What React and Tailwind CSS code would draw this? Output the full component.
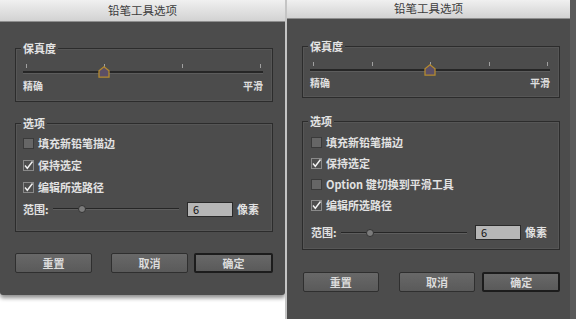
import React from 'react';

const FONT = { fontFamily: '"Noto Sans CJK SC", "Noto Sans", sans-serif' };

const CheckBox = ({ checked }) => (
  <svg width="11" height="11" viewBox="0 0 11 11" className="shrink-0">
    <rect x="0.5" y="0.5" width="10" height="10" fill={checked ? '#4e4e4e' : '#666666'} stroke={checked ? '#8a8a8a' : '#3a3a3a'} />
    {checked && <polyline points="2,5.5 4.3,8.3 9.5,1.5" fill="none" stroke="#f2f2f2" strokeWidth="1.4" />}
  </svg>
);

const Thumb = () => (
  <svg width="12" height="12" viewBox="0 0 12 12">
    <path d="M6 0.8 L11 4.8 L11 11.2 L1 11.2 L1 4.8 Z" fill="#5b4f66" stroke="#b48a2e" strokeWidth="1.3" />
  </svg>
);

const Group = ({ label, className, children }) => (
  <div className={`relative border border-[#2c2c2c] shadow-[inset_0_0_0_1px_#565656] ${className}`}>
    <span className="absolute left-[5px] -top-[8px] px-[2px] bg-[#4c4c4c] text-[11px] leading-[14px] font-bold text-[#e4e4e4]">
      {label}
    </span>
    {children}
  </div>
);

const Fidelity = ({ ticks, pos, labelGap, className }) => (
  <Group label="保真度" className={className}>
    <div className="pt-[15px] pl-[7px] pr-[9px]">
      <div className="relative h-[12px]">
        <div className="absolute left-[3px] right-[3px] top-0 h-[4px]">
          {ticks.map((t) => (
            <div key={t} className="absolute top-0 w-[1px] h-[4px] bg-[#a0a0a0]" style={{ left: `${t * 100}%` }} />
          ))}
        </div>
        <div className="absolute left-0 right-0 top-[7px] h-[3px] bg-[#262626] border-b border-[#5c5c5c]" />
        <div className="absolute left-[3px] right-[3px] top-[2px] h-[12px]">
          <div className="absolute -translate-x-1/2" style={{ left: `${pos * 100}%` }}>
            <Thumb />
          </div>
        </div>
      </div>
      <div className={`flex justify-between text-[10px] leading-[12px] font-bold text-[#e0e0e0] ${labelGap}`}>
        <span>精确</span>
        <span>平滑</span>
      </div>
    </div>
  </Group>
);

const Row = ({ checked, h, children }) => (
  <div className={`flex items-center gap-[4px] ${h}`}>
    <CheckBox checked={checked} />
    <span className="text-[11px] font-bold text-[#e2e2e2] whitespace-nowrap">{children}</span>
  </div>
);

const RangeRow = ({ h, className = '' }) => (
  <div className={`flex items-center ${h} ${className}`}>
    <span className="w-[30px] text-[11px] font-bold text-[#e2e2e2]">范围:</span>
    <div className="relative w-[126px] h-[8px] flex items-center">
      <div className="w-full h-[2px] bg-[#262626] border-b border-[#5e5e5e]" />
      <div className="absolute left-[25px] top-0 w-[8px] h-[8px] rounded-full bg-[#7c7c7c] border border-[#333333]" />
    </div>
    <div className="ml-[8px] w-[46px] h-[15px] bg-[#b6b6b6] border border-[#2a2a2a] pl-[5px] text-[11px] leading-[13px] text-[#111111]">6</div>
    <span className="ml-[4px] text-[11px] font-bold text-[#e2e2e2]">像素</span>
  </div>
);

const Button = ({ children, primary, className = '' }) => (
  <div
    className={`h-[20px] flex items-center justify-center rounded-[2px] text-[11px] font-bold text-[#dcdcdc] bg-gradient-to-b from-[#686868] to-[#5a5a5a] ${
      primary ? 'border-2 border-[#1c1c1c]' : 'border border-[#2f2f2f]'
    } ${className}`}
  >
    {children}
  </div>
);

const TitleBar = ({ h }) => (
  <div className={`${h} shrink-0 bg-gradient-to-b from-[#f0f0f0] to-[#d2d2d2] border-b border-[#8e8e8e] flex items-center justify-center text-[11.5px] text-[#3c3c3c]`}>
    铅笔工具选项
  </div>
);

export default function App() {
  return (
    <div className="w-[576px] h-[319px] bg-white flex overflow-hidden" style={FONT}>
      {/* left dialog */}
      <div className="w-[285px] h-[295px] bg-[#4c4c4c] flex flex-col rounded-b-[3px] shadow-[0_3px_4px_rgba(0,0,0,0.45)]">
        <TitleBar h="h-[22px]" />
        <div className="pl-[15px] pr-[12px]">
          <Fidelity ticks={[0, 1 / 3, 2 / 3, 1]} pos={1 / 3} labelGap="mt-[4px]" className="mt-[26px] h-[54px]" />
          <Group label="选项" className="mt-[21px] h-[109px]">
            <div className="pt-[8px] pl-[7px]">
              <Row h="h-[22px]">填充新铅笔描边</Row>
              <Row h="h-[22px]" checked>保持选定</Row>
              <Row h="h-[22px]" checked>编辑所选路径</Row>
              <RangeRow h="h-[22px]" />
            </div>
          </Group>
          <div className="flex mt-[21px]">
            <Button className="w-[77px]">重置</Button>
            <Button className="w-[77px] ml-[19px]">取消</Button>
            <Button className="w-[79px] ml-[6px]" primary>确定</Button>
          </div>
        </div>
      </div>

      <div className="w-[2px] h-full bg-[#c4c4c4] shrink-0" />

      {/* right dialog */}
      <div className="w-[289px] h-full bg-[#4c4c4c] flex flex-col border-r-[6px] border-[#5a5a5a]">
        <TitleBar h="h-[19px]" />
        <div className="pl-[15px] pr-[10px]">
          <Fidelity ticks={[0, 0.25, 0.5, 0.75, 1]} pos={0.5} labelGap="mt-[3px]" className="mt-[27px] h-[52px]" />
          <Group label="选项" className="mt-[23px] h-[129px]">
            <div className="pt-[10px] pl-[8px]">
              <Row h="h-[21px]">填充新铅笔描边</Row>
              <Row h="h-[21px]" checked>保持选定</Row>
              <Row h="h-[21px]">Option 键切换到平滑工具</Row>
              <Row h="h-[21px]" checked>编辑所选路径</Row>
              <RangeRow h="h-[21px]" className="mt-[6px]" />
            </div>
          </Group>
          <div className="flex mt-[22px]">
            <Button className="w-[76px] ml-[1px]">重置</Button>
            <Button className="w-[77px] ml-[20px]">取消</Button>
            <Button className="w-[78px] ml-[7px]" primary>确定</Button>
          </div>
        </div>
      </div>
    </div>
  );
}
